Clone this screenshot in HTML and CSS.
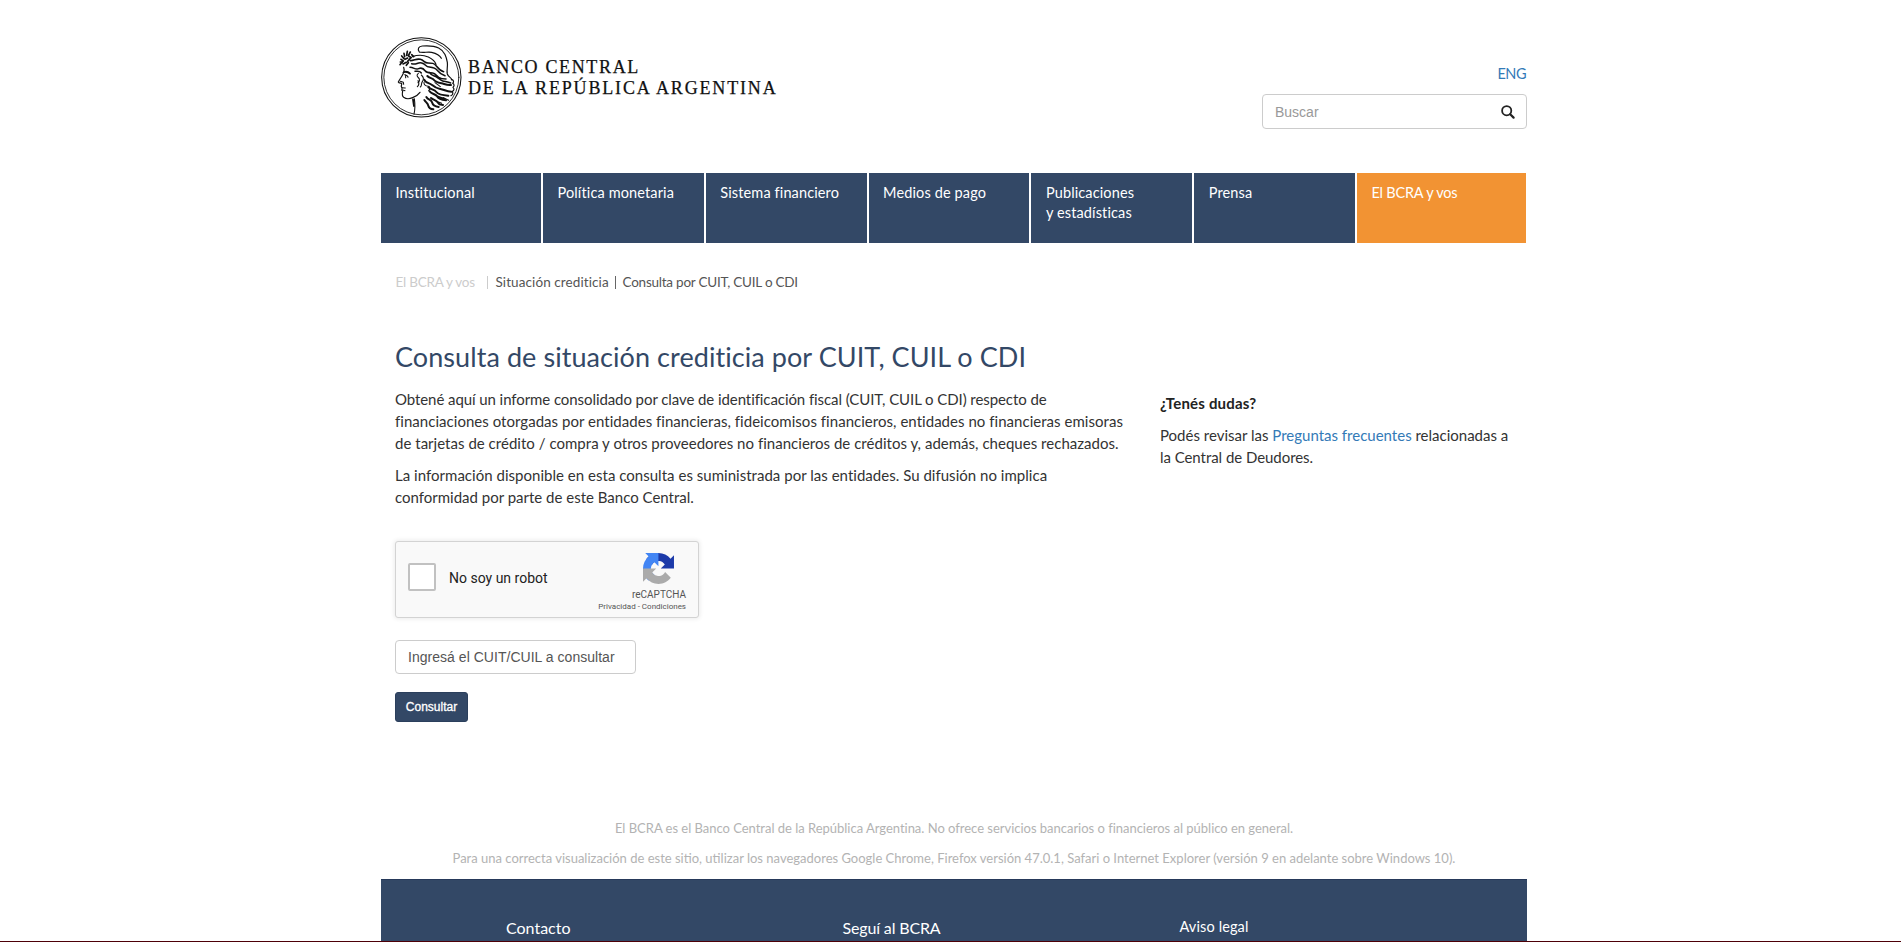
FILE: index.html
```html
<!DOCTYPE html>
<html lang="es">
<head>
<meta charset="utf-8">
<title>Consulta de situación crediticia por CUIT, CUIL o CDI</title>
<link rel="stylesheet" href="styles.css">
</head>
<body>
<div class="page">
  <header class="header">
    <a class="logo">
      <svg class="seal" viewBox="15 18 249 249" fill="none" stroke="#111" stroke-linecap="round" stroke-linejoin="round">
        <circle cx="139" cy="142" r="119" stroke-width="3.2"/>
        <circle cx="139" cy="142" r="112.5" stroke-width="2.6"/>
        <!-- profile -->
        <path stroke-width="3.6" d="M86 112c4 8 0 14-2 20-4 9-10 16-14 24 1 4 6 3 10 4 1 4-2 7-1 10 2 2 3 3 2 6-2 4 0 6 2 8-2 8-2 14 3 18 8 6 20 4 27 1 10-4 17-9 22-16"/>
        <path stroke-width="3.2" d="M76 154l9 3 1 6M80 173l11 1M83 180l7 2M118 206c2 14 3 30-1 46M84 128c6-4 13-3 20 2M89 134c5 1 10 3 10 8M92 134v9"/>
        <path stroke-width="5.5" d="M88 126c6-2 13 1 17 5M114 208l3 20"/>
        <!-- laurel -->
        <path stroke-width="5" d="M75 104l8-10M78 88l7 5M80 78l7 8M87 70l2 10M97 64l-2 12M106 66l-6 11M90 88l8-4M84 102l10-5M98 94l8-9M94 106l6-8M102 79l7 4M76 96l6 1M110 74l6 6"/>
        <!-- cap -->
        <path stroke-width="3.6" d="M133 66c-7-9-2-17 9-18 14-1 35-1 49 6 19 10 23 27 26 43 2 14-3 24 0 35 3 9 10 9 14 17M133 66c13 4 24-2 37 1 14 3 25 10 29 18"/>
        <path stroke-width="3.6" d="M112 80c14-5 34-5 48 1 12 6 20 13 23 22M229 149c8 1 8 7 4 11 6 3 5 9 1 12 5 5 3 10-2 12 3 7 1 11-4 13"/>
        <!-- hair -->
        <path stroke-width="4.6" d="M106 92c12 0 18-7 30-4s11 11 23 11 18 0 25 9 11 14 22 17M110 101c14 5 17-5 30-2s11 11 23 12 18 2 25 11 12 12 22 15M105 112c12 1 18 8 26 4s15 0 20 7 14 5 22 6 12 9 18 13 14 5 22 5M120 124c10 0 14-2 19 5M163 128c6 9 15 9 22 13s10 10 18 12 17 3 24 6"/>
        <path stroke-width="6" d="M157 138c6 7 16 6 20 12s14 8 23 10 14 6 28 5M148 149c3 10 15 9 22 15s12 11 23 12 21 9 36 9M160 172c8 7 18 6 24 14s18 10 36 11M164 184c6 8 18 8 22 15s17 11 27 12M154 201c5 9 15 8 17 16s10 13 20 14M168 204c7 6 17 7 21 14s7 6 15 7M148 210c5 8 10 9 12 17s8 10 15 11M184 197c8 7 18 6 25 10"/>
        <path stroke-width="3.2" d="M130 130c-7 6-3 10 1 14s3 10-2 14M139 135c7 6 8 13 3 20s0 12-6 16M147 157c-1 9 6 11 13 12s5 9 1 13M129 152c3 5 3 13-2 18M184 214l16 6M180 158l16 12M205 203l16 8"/>
      </svg>
      <span class="logo-text"><span class="logo-a">BANCO CENTRAL</span><span class="logo-b">DE LA REPÚBLICA ARGENTINA</span></span>
    </a>
    <div class="tools">
      <a class="lang">ENG</a>
      <div class="search">
        <span>Buscar</span>
        <svg width="14" height="14" viewBox="0 0 14 14" fill="none" stroke="#222"><circle cx="5.7" cy="5.7" r="4.6" stroke-width="1.8"/><path d="M9.2 9.2l3.4 3.4" stroke-width="2.2" stroke-linecap="round"/></svg>
      </div>
    </div>
  </header>

  <nav class="nav">
    <a>Institucional</a>
    <a>Política monetaria</a>
    <a>Sistema financiero</a>
    <a>Medios de pago</a>
    <a>Publicaciones<br>y estadísticas</a>
    <a>Prensa</a>
    <a class="active">El BCRA y vos</a>
  </nav>

  <div class="crumbs">
    <span class="crumb-root">El BCRA y vos</span><i class="bar bar-light"></i><span class="crumb-mid">Situación crediticia</span><i class="bar"></i><span class="crumb-last">Consulta por CUIT, CUIL o CDI</span>
  </div>

  <div class="content">
    <main class="main">
      <h1>Consulta de situación crediticia por CUIT, CUIL o CDI</h1>
      <p><span class="line tight">Obtené aquí un informe consolidado por clave de identificación fiscal (CUIT, CUIL o CDI) respecto de</span>
      <span class="line wide">financiaciones otorgadas por entidades financieras, fideicomisos financieros, entidades no financieras emisoras</span>
      <span class="line open">de tarjetas de crédito / compra y otros proveedores no financieros de créditos y, además, cheques rechazados.</span></p>
      <p><span class="line open">La información disponible en esta consulta es suministrada por las entidades. Su difusión no implica</span>
      <span class="line">conformidad por parte de este Banco Central.</span></p>

      <div class="captcha">
        <span class="check"></span>
        <span class="captcha-label">No soy un robot</span>
        <div class="captcha-brand">
          <svg width="31" height="31" viewBox="0 0 64 64">
            <path fill="#1c3aa9" d="M64 31.955a33 33 0 0 0-.037-1.37V4.687l-7.16 7.16C50.944 4.674 42.033.093 32.05.093c-10.388 0-19.616 4.96-25.458 12.64l11.736 11.86a15.55 15.55 0 0 1 4.754-5.334c2.05-1.6 4.952-2.906 8.968-2.906.485 0 .86.057 1.135.163 4.976.393 9.288 3.14 11.828 7.124l-8.307 8.307z"/>
            <path fill="#4285f4" d="M31.862.094a33 33 0 0 0-1.37.037H4.594l7.16 7.16C4.58 13.147 0 22.06 0 32.04c0 10.388 4.96 19.616 12.64 25.458L24.5 45.762a15.55 15.55 0 0 1-5.334-4.754c-1.6-2.05-2.906-4.952-2.906-8.968 0-.485.057-.86.163-1.135.393-4.976 3.14-9.288 7.124-11.828l8.307 8.307z"/>
            <path fill="#ababab" d="M.001 32.045a33 33 0 0 0 .037 1.37v25.898l7.16-7.16c5.86 7.173 14.774 11.754 24.754 11.754 10.388 0 19.616-4.96 25.458-12.64l-11.736-11.86a15.55 15.55 0 0 1-4.754 5.334c-2.05 1.6-4.952 2.906-8.968 2.906-.485 0-.86-.057-1.135-.163-4.976-.393-9.288-3.14-11.828-7.124l8.307-8.307z"/>
          </svg>
          <span class="brand-name">reCAPTCHA</span>
          <span class="brand-links">Privacidad - Condiciones</span>
        </div>
      </div>
      <div class="field">Ingresá el CUIT/CUIL a consultar</div>
      <button class="btn" type="button">Consultar</button>
    </main>
    <aside class="aside">
      <p class="aside-title">¿Tenés dudas?</p>
      <p><span class="line">Podés revisar las <a>Preguntas frecuentes</a> relacionadas a</span>
      <span class="line snug">la Central de Deudores.</span></p>
    </aside>
  </div>

  <div class="notes">
    <p class="note-a">El BCRA es el Banco Central de la República Argentina. No ofrece servicios bancarios o financieros al público en general.</p>
    <p>Para una correcta visualización de este sitio, utilizar los navegadores Google Chrome, Firefox versión 47.0.1, Safari o Internet Explorer (versión 9 en adelante sobre Windows 10).</p>
  </div>
  <footer class="footer">
    <span class="foot-contact">Contacto</span>
    <span class="foot-follow">Seguí al BCRA</span>
    <span class="foot-legal">Aviso legal</span>
  </footer>
</div>
<div class="edge"></div>
</body>
</html>
```

FILE: styles.css
```css
* { box-sizing: border-box; }
body {
  margin: 0;
  height: 942px;
  overflow: hidden;
  display: flex;
  flex-direction: column;
  background: #fff;
  color: #333;
  font: 15px/22px Lato, sans-serif;
}
.page { width: 1146px; height: 941px; margin-left: 381px; display: flex; flex-direction: column; }
.edge { height: 1px; background: #4d0008; }

.header { height: 173px; display: flex; justify-content: space-between; }
.logo { display: flex; margin: 36px 0 0 -1px; height: 83px; color: #111; }
.seal { width: 83px; height: 83px; }
.logo-text {
  display: flex;
  flex-direction: column;
  margin: 21px 0 0 5px;
  font: 18px/21px "Liberation Serif", serif;
  white-space: nowrap;
  -webkit-text-stroke: 0.25px #111;
}
.logo-a { letter-spacing: 1.65px; }
.logo-b { letter-spacing: 1.84px; }
.tools { width: 265px; padding-top: 63px; display: flex; flex-direction: column; }
.lang { align-self: flex-end; height: 31px; color: #337ab7; font-size: 14.5px; letter-spacing: -0.5px; padding-right: 1px; }
.search {
  height: 35px;
  display: flex;
  align-items: center;
  justify-content: space-between;
  padding: 0 11px 0 12px;
  border: 1px solid #ccc;
  border-radius: 4px;
  color: #999;
  font: 14px/20px "Liberation Sans", sans-serif;
}

.nav { display: grid; grid-template-columns: 160px repeat(5, 160.8px) 169px; gap: 2px; height: 70px; }
.nav a {
  background: #334866;
  color: #fff;
  padding: 10px 0 0 14.5px;
  font-size: 14.5px;
  line-height: 20px;
  letter-spacing: 0.13px;
}
.nav a.active { background: #f29333; letter-spacing: -0.2px; }

.crumbs { display: flex; align-items: center; height: 22px; margin: 28px 0 0 14.5px; font-size: 13.5px; color: #555; white-space: nowrap; }
.crumb-root { color: #ccc; width: 91px; letter-spacing: -0.24px; }
.crumb-mid { width: 119px; letter-spacing: 0.09px; }
.crumb-last { letter-spacing: -0.23px; }
.bar { width: 1px; height: 13px; margin-right: 7px; background: #666; }
.bar-light { margin-right: 8px; background: #ccc; }

.content { display: flex; height: 520px; padding-left: 14px; }
.main { width: 765px; padding-top: 47px; }
h1 { margin: 0 0 14px; font-weight: 400; font-size: 27px; line-height: 34px; letter-spacing: 0.07px; color: #334866; }
p { margin: 0 0 10px; }
.line { display: block; white-space: nowrap; }
.tight { letter-spacing: -0.078px; }
.wide { letter-spacing: 0.035px; }
.open { letter-spacing: 0.025px; }
.snug { letter-spacing: -0.05px; }

.captcha {
  width: 304px;
  height: 77px;
  margin-top: 33px;
  display: flex;
  padding-left: 12px;
  border: 1px solid #d3d3d3;
  border-radius: 3px;
  background: #f9f9f9;
  box-shadow: 0 0 4px 1px rgba(0, 0, 0, 0.08);
  font-family: Roboto, sans-serif;
}
.check { width: 28px; height: 28px; margin-top: 21px; border: 2px solid #c1c1c1; border-radius: 2px; background: #fff; }
.captcha-label { margin: 25px 0 0 13px; font-size: 14px; color: #222; }
.captcha-brand { display: flex; flex-direction: column; align-items: flex-end; margin: 11px 12px 0 auto; color: #555; }
.captcha-brand svg { margin-right: 12px; }
.brand-name { margin-top: 5px; font-size: 10px; line-height: 12px; }
.brand-links { margin-top: 1px; font-size: 8px; line-height: 10px; }

.field {
  width: 241px;
  height: 34px;
  margin-top: 22px;
  padding-left: 12px;
  border: 1px solid #ccc;
  border-radius: 4px;
  color: #555;
  font: 14px/32px "Liberation Sans", sans-serif;
  letter-spacing: 0.03px;
}
.btn {
  display: block;
  width: 73px;
  height: 30px;
  margin-top: 18px;
  padding: 0;
  border: 1px solid #2b3f5c;
  border-radius: 3px;
  background: #334866;
  color: #fff;
  font: 12px/18px "Liberation Sans", sans-serif;
  -webkit-text-stroke: 0.3px #fff;
}
.aside { padding-top: 99px; }
.aside-title { font-weight: 700; color: #222; letter-spacing: 0.2px; }
.aside a { color: #337ab7; }

.notes { height: 65px; padding-top: 4px; text-align: center; font-size: 13px; color: #b3b3b3; white-space: nowrap; }
.notes p { margin: 0 0 8px; }
.note-a { letter-spacing: -0.019px; }

.footer {
  flex: 1;
  display: flex;
  margin-top: 1px;
  padding: 36px 0 0 125px;
  border-top: 1px solid #26395a;
  background: #334866;
  color: #fff;
  font-size: 16px;
  overflow: hidden;
}
.foot-contact { width: 336.5px; padding-top: 1px; }
.foot-follow { width: 337px; padding-top: 1px; letter-spacing: -0.15px; }
.foot-legal { font-size: 14.5px; letter-spacing: 0.12px; }
```
